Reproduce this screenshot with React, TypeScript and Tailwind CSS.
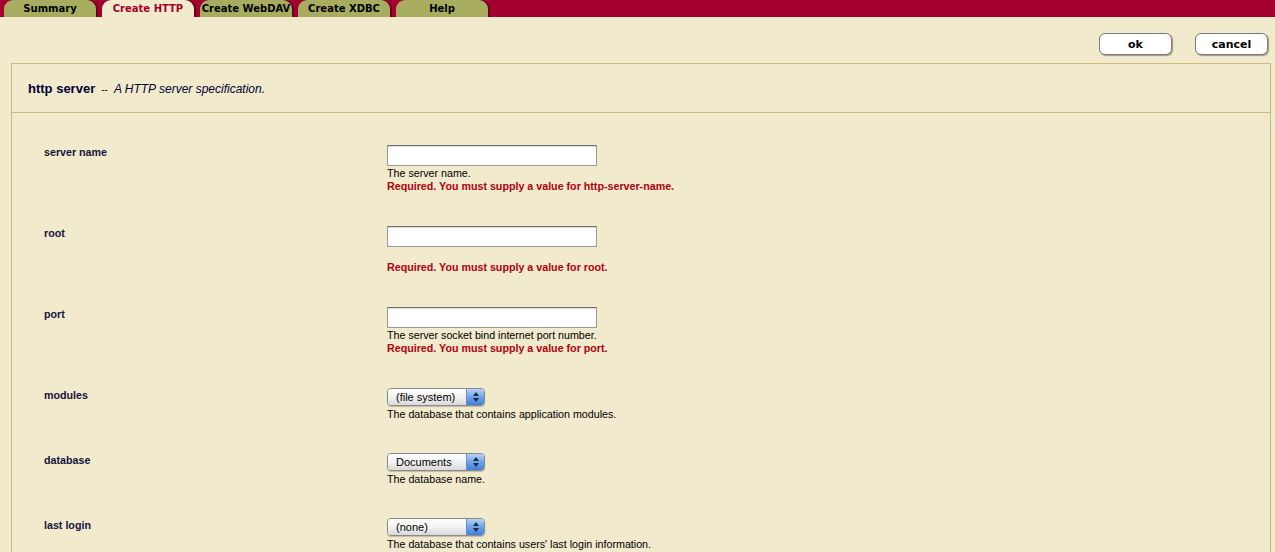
import React from 'react'

const tabs = ['Summary', 'Create HTTP', 'Create WebDAV', 'Create XDBC', 'Help']

function TextField() {
  return (
    <div className="mb-[1px] h-[21px] w-[210px] border border-[#9a9a9a] border-t-[#6f6f6f] bg-white shadow-[inset_0_1px_1px_rgba(0,0,0,0.15)]" />
  )
}

function Select({ value }: { value: string }) {
  return (
    <div className="mb-[2px] flex h-[18px] w-[98px] overflow-hidden rounded-[4px] border border-[#8a8a8a] shadow-[0_1px_1px_rgba(0,0,0,0.2)]">
      <div className="flex flex-1 items-center bg-gradient-to-b from-white via-[#f2f2f2] to-[#d9d9d9] pl-[8px] text-[11px] leading-none text-black">
        {value}
      </div>
      <div className="flex w-[18px] flex-col items-center justify-center gap-[2px] border-l border-[#6b8fc7] bg-gradient-to-b from-[#b9d3f6] via-[#6fa3ea] to-[#3f7fdc]">
        <svg width="6" height="4" viewBox="0 0 6 4"><path d="M3 0L6 4H0z" fill="#1b2a44" /></svg>
        <svg width="6" height="4" viewBox="0 0 6 4"><path d="M0 0h6L3 4z" fill="#1b2a44" /></svg>
      </div>
    </div>
  )
}

interface Row {
  label: string
  control: React.ReactNode
  help?: string
  error?: string
  blankHelp?: boolean
  select?: boolean
}

const rows: Row[] = [
  { label: 'server name', control: <TextField />, help: 'The server name.', error: 'Required. You must supply a value for http-server-name.' },
  { label: 'root', control: <TextField />, blankHelp: true, error: 'Required. You must supply a value for root.' },
  { label: 'port', control: <TextField />, help: 'The server socket bind internet port number.', error: 'Required. You must supply a value for port.' },
  { label: 'modules', control: <Select value="(file system)" />, help: 'The database that contains application modules.', select: true },
  { label: 'database', control: <Select value="Documents" />, help: 'The database name.', select: true },
  { label: 'last login', control: <Select value="(none)" />, help: "The database that contains users' last login information.", select: true },
]

export default function App() {
  return (
    <div className="h-[552px] w-[1275px] overflow-hidden bg-[#f2eacd] font-['Liberation_Sans',Arial,sans-serif]">
      {/* Tab strip */}
      <div className="flex h-[17px] items-end gap-[6px] bg-[#a3002f] pl-[4px]">
        {tabs.map((t) => {
          const active = t === 'Create HTTP'
          return (
            <div
              key={t}
              className={`flex h-[17px] w-[92px] items-center justify-center rounded-t-[9px] font-['DejaVu_Sans',Verdana,sans-serif] text-[10px] font-bold leading-none shadow-[2px_0_0_#6a0020] ${
                active ? 'bg-[#f2eacd] text-[#a3002f]' : 'bg-[#a8ac5e] text-black'
              }`}
            >
              {t}
            </div>
          )
        })}
      </div>

      {/* Action buttons */}
      <div className="flex justify-end gap-[23px] pr-[7px] pt-[16px]">
        {['ok', 'cancel'].map((b) => (
          <button
            key={b}
            className="h-[22px] w-[73px] rounded-[6px] border border-[#7a7a7a] bg-white font-['DejaVu_Sans',Verdana,sans-serif] text-[11px] font-bold leading-none text-black shadow-[1px_1px_1px_rgba(0,0,0,0.35)]"
          >
            {b}
          </button>
        ))}
      </div>

      {/* Panel */}
      <div className="ml-[11px] mr-[4px] mt-[8px] border-l border-r border-t border-[#cbbb7c]">
        <div className="flex h-[49px] items-center border-b border-[#cbbb7c] pl-[16px] pt-[2px] text-[12px] text-[#000033]">
          <span className="text-[13px] font-bold">http server</span>
          <span className="ml-[6px] mr-[6px] text-[10px]">--</span>
          <span className="italic">A HTTP server specification.</span>
        </div>

        <div className="flex flex-col pl-[32px] pt-[32px]">
          {rows.map((r) => (
            <div key={r.label} className={`flex ${r.select ? 'pb-[32px]' : 'pb-[33px]'}`}>
              <div className="w-[343px] pt-[1px] text-[10.7px] font-bold leading-[13px] text-[#14143c]">{r.label}</div>
              <div className="flex flex-col text-[10.7px] leading-[13px]">
                {r.control}
                {r.help && <div className="text-black">{r.help}</div>}
                {r.blankHelp && <div className="h-[13px]" />}
                {r.error && <div className="font-bold text-[#b0000f]">{r.error}</div>}
              </div>
            </div>
          ))}
        </div>
      </div>
    </div>
  )
}
